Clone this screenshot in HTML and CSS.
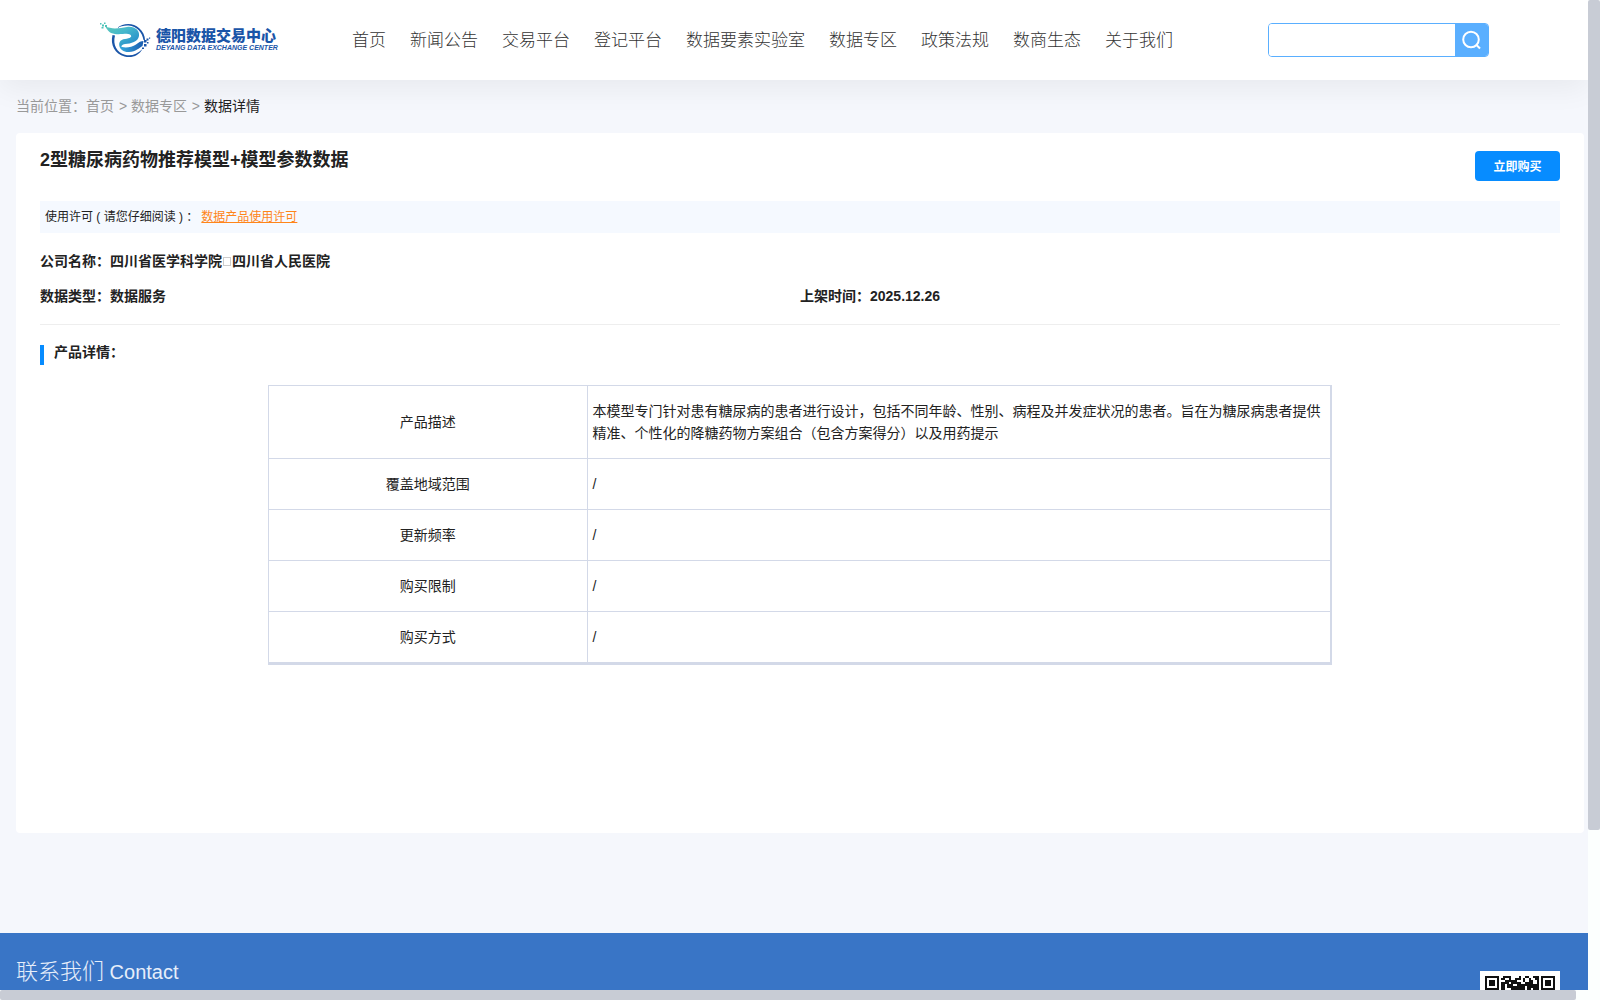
FILE: index.html
```html
<!DOCTYPE html>
<html lang="zh-CN">
<head>
<meta charset="UTF-8">
<meta name="viewport" content="width=device-width, initial-scale=1.0">
<title>德阳数据交易中心</title>
<link rel="stylesheet" href="styles.css">
</head>
<body>
    <header class="header">
        <a class="logo" href="#" aria-label="德阳数据交易中心">
            <svg width="180" height="40" viewBox="0 0 180 40">
                <defs>
                    <linearGradient id="swoosh" x1="0" y1="0" x2="1" y2="1">
                        <stop offset="0" stop-color="#5cc8b8"/>
                        <stop offset="0.4" stop-color="#45b8cc"/>
                        <stop offset="1" stop-color="#1b7cca"/>
                    </linearGradient>
                    <linearGradient id="tail" x1="0" y1="0" x2="1" y2="0">
                        <stop offset="0" stop-color="#35a8dc"/>
                        <stop offset="1" stop-color="#1a5cb0"/>
                    </linearGradient>
                </defs>
                <path d="M17 8C23 3 33 2.500 39 8C43 11.500 45 16 45 20L43.500 20C42.500 13 37 6 28.500 5.500C24 5.300 20 6.500 17 8Z" fill="#1a55a8"/>
                <path d="M12.500 15C10 25 15 34 24.500 36.500C32 38.500 39 35.500 42.500 29C37 34.500 31 36.300 25 34.800C17 32.500 12.500 25 15 15.500Z" fill="#1a55a8"/>
                <path d="M5 6C12 10 20 8 27 7C35 6 40 11 39 16C38 22 31 23.500 25 24C22 24.500 21 26 20.500 29C17.500 23 20 19.500 25 19C30 18.500 33 16.500 30 14.500C26 12.500 19 16 11 13C9 12 7 9.500 5 6Z" fill="url(#swoosh)"/>
                <path d="M20 25.500C22 28.500 31 28 36 24.500C39 22 41 21 43.500 21L42.500 26C39 28 36 31.500 29 32C24 32.300 20 30 20 25.500Z" fill="url(#tail)"/>
                <path d="M0 3h1.500v1.500H0zM2 4.500h2v2H2zM4 2.500h1.500v1.500H4zM1.500 7h2v1.500h-2zM5 5h2v2H5z" fill="#4fc3b8"/>
                <path d="M44 20h2.500v2.500H44zM46.500 18.500h2v2h-2zM44 24h2.500v2.500H44zM47 22h1.500v1.500H47zM49 17.500h1.200v1.200H49zM42 27.500h2v1.500h-2z" fill="#1a55a8"/>
                <text class="logo-cn" x="56" y="21">德阳数据交易中心</text>
                <text class="logo-en" x="56" y="30">DEYANG DATA EXCHANGE CENTER</text>
            </svg>
        </a>
        <nav class="nav">
            <a href="#">首页</a>
            <a href="#">新闻公告</a>
            <a href="#">交易平台</a>
            <a href="#">登记平台</a>
            <a href="#">数据要素实验室</a>
            <a href="#">数据专区</a>
            <a href="#">政策法规</a>
            <a href="#">数商生态</a>
            <a href="#">关于我们</a>
        </nav>
        <form class="search">
            <input type="text" aria-label="搜索">
            <button type="button" aria-label="搜索">
                <svg width="20" height="20" viewBox="0 0 20 20" fill="none" stroke="#fff" stroke-width="2">
                    <circle cx="9" cy="9.500" r="7.800"/>
                    <path d="M14 14.500L18 18.500"/>
                </svg>
            </button>
        </form>
    </header>

    <div class="breadcrumb">
        <span>当前位置：</span><a href="#">首页</a>
        <span class="sep">&gt;</span>
        <a href="#">数据专区</a>
        <span class="sep">&gt;</span>
        <span class="current">数据详情</span>
    </div>

    <main class="card">
        <div class="card-top">
            <h1>2型糖尿病药物推荐模型+模型参数数据</h1>
            <button class="buy" type="button">立即购买</button>
        </div>
        <div class="license">使用许可 ( 请您仔细阅读 ) ：<a href="#">数据产品使用许可</a></div>
        <div class="info">
            <div class="info-item full">公司名称：四川省医学科学院<span class="dot"></span>四川省人民医院</div>
            <div class="info-item">数据类型：数据服务</div>
            <div class="info-item">上架时间：2025.12.26</div>
        </div>
        <h2 class="section-title">产品详情：</h2>
        <table class="detail">
            <tbody>
                <tr>
                    <th scope="row">产品描述</th>
                    <td>本模型专门针对患有糖尿病的患者进行设计，包括不同年龄、性别、病程及并发症状况的患者。旨在为糖尿病患者提供精准、个性化的降糖药物方案组合（包含方案得分）以及用药提示</td>
                </tr>
                <tr>
                    <th scope="row">覆盖地域范围</th>
                    <td>/</td>
                </tr>
                <tr>
                    <th scope="row">更新频率</th>
                    <td>/</td>
                </tr>
                <tr>
                    <th scope="row">购买限制</th>
                    <td>/</td>
                </tr>
                <tr>
                    <th scope="row">购买方式</th>
                    <td>/</td>
                </tr>
            </tbody>
        </table>
    </main>

    <footer class="footer">
        <div class="contact"><span class="contact-cn">联系我们</span> Contact</div>
        <svg class="qrcode" width="80" height="80" viewBox="0 0 80 80" shape-rendering="crispEdges">
            <rect width="80" height="80" fill="#fff"/>
            <g fill="none" stroke="#111" stroke-width="2">
                <rect x="6" y="6" width="12" height="12"/>
                <rect x="62" y="6" width="12" height="12"/>
                <rect x="6" y="62" width="12" height="12"/>
            </g>
            <path d="M9 9h6v6H9zM65 9h6v6h-6zM9 65h6v6H9z" fill="#111"/>
            <path d="M23 5h8v2h-8zM39 5h2v4h-2zM45 5h4v2h-4zM53 5h6v2h-6zM21 7h4v2h-4zM29 7h2v4h-2zM35 7h4v2h-4zM43 7h2v4h-2zM49 7h2v4h-2zM55 7h4v2h-4zM21 11h4v4h-4zM25 9h4v4h-4zM31 9h6v4h-6zM45 11h6v4h-6zM51 9h2v4h-2zM57 9h2v8h-2zM27 13h6v4h-6zM37 11h4v4h-4zM41 13h4v6h-4zM51 13h6v4h-6zM21 15h4v4h-4zM31 15h4v4h-4zM35 15h6v4h-6zM47 15h4v4h-4zM53 17h6v2h-6z" fill="#111"/>
            <path d="M5 23h6v2H5zM15 23h4v4h-4zM23 21h8v4h-8zM37 23h6v2h-6zM49 23h8v4h-8zM63 23h4v4h-4zM7 29h8v4H7zM21 31h6v4h-6zM33 29h8v6h-8zM47 31h4v6h-4zM57 31h8v2h-8zM69 27h6v6h-6zM5 39h4v6H5zM15 37h6v6h-6zM27 41h8v4h-8zM41 39h4v8h-4zM53 41h6v4h-6zM63 37h8v6h-8zM9 49h8v4H9zM23 51h6v6h-6zM35 51h4v8h-4zM45 51h6v4h-6zM57 49h6v6h-6zM69 47h4v8h-4zM23 63h6v4h-6zM35 63h8v4h-8zM49 61h4v6h-4zM57 61h8v4h-8zM69 61h4v6h-4zM25 71h8v4h-8zM39 69h4v6h-4zM49 71h8v4h-8zM63 69h10v4H63z" fill="#111"/>
        </svg>
    </footer>

    <div class="scrollbar-y"><div class="thumb"></div></div>
    <div class="scrollbar-x"><div class="thumb"></div></div>
</body>
</html>
```
FILE: styles.css
```css
* {
    box-sizing: border-box;
}
body {
    margin: 0;
    font-family: "Liberation Sans", "Noto Sans CJK SC", sans-serif;
    font-size: 14px;
    line-height: 22px;
    color: #222;
    background-color: #f5f7fc;
}
a {
    color: inherit;
    text-decoration: none;
}

/* Header */
.header {
    display: flex;
    align-items: center;
    height: 80px;
    margin-right: 12px;
    padding: 0 99px 0 100px;
    background-color: #fff;
    box-shadow: 0 8px 30px rgba(0, 0, 0, 0.06);
}
.logo {
    display: flex;
    margin-right: 60px;
}
.logo-cn {
    font-family: "Noto Sans CJK SC", sans-serif;
    font-size: 15px;
    font-weight: 900;
    fill: #1a55a8;
}
.logo-en {
    font-size: 7px;
    font-weight: bold;
    font-style: italic;
    fill: #1a55a8;
}
.nav {
    display: flex;
    flex: 1;
    padding-top: 2px;
    font-size: 17px;
    font-weight: 300;
    color: #333;
}
.nav a {
    padding: 0 12px;
    white-space: nowrap;
}
.search {
    display: flex;
    width: 221px;
    height: 34px;
    border: 1px solid #5aafff;
    border-radius: 4px;
    overflow: hidden;
}
.search input {
    flex: 1;
    min-width: 0;
    padding: 0 10px;
    border: none;
    outline: none;
}
.search button {
    display: flex;
    align-items: center;
    justify-content: center;
    width: 33px;
    padding: 0;
    border: none;
    background-color: #5aafff;
    cursor: pointer;
}

/* Breadcrumb */
.breadcrumb {
    padding: 15px 16px 16px;
    color: #999;
}
.breadcrumb .sep {
    margin-left: 1px;
}
.breadcrumb .current {
    color: #222;
}

/* Product card */
.card {
    min-height: 700px;
    margin: 0 16px 100px;
    padding: 18px 24px;
    background-color: #fff;
    border-radius: 4px;
}
.card-top {
    display: flex;
    justify-content: space-between;
    align-items: flex-start;
    margin-bottom: 20px;
}
h1 {
    margin: 0;
    font-size: 18px;
    line-height: 18px;
}
.buy {
    width: 85px;
    height: 30px;
    padding: 0 0 2px;
    border: none;
    border-radius: 4px;
    font-family: inherit;
    font-size: 12px;
    font-weight: bold;
    color: #fff;
    background-color: #078cff;
    cursor: pointer;
}
.license {
    padding: 0 5px;
    font-size: 12px;
    line-height: 32px;
    background-color: #f5f9ff;
}
.license a {
    margin-left: 3px;
    color: #ff8519;
    text-decoration: underline;
}
.info {
    display: flex;
    flex-wrap: wrap;
    row-gap: 13px;
    padding: 17px 0;
    border-bottom: 1px solid #eee;
    font-weight: bold;
}
.info-item {
    width: 50%;
}
.info-item.full {
    width: 100%;
}
.dot {
    display: inline-block;
    width: 8px;
    height: 9px;
    margin: 0 1px;
    border: 1px solid #ccc;
}
.section-title {
    margin: 20px 0;
    padding: 0 0 6px 10px;
    border-left: 4px solid #078cff;
    font-size: 14px;
    line-height: 14px;
}
.detail {
    width: 70%;
    margin: 0 auto;
    border: 1px solid #d3d9e8;
    border-bottom-width: 2px;
    border-collapse: separate;
    border-spacing: 0;
    table-layout: fixed;
}
.detail th,
.detail td {
    padding: 14px 5px;
    border-right: 1px solid #d3d9e8;
    border-bottom: 1px solid #d3d9e8;
    text-align: left;
}
.detail th {
    width: 30%;
    font-weight: normal;
    text-align: center;
}

/* Footer */
.footer {
    display: flex;
    justify-content: space-between;
    min-height: 246px;
    padding: 28px 40px 28px 16px;
    background-color: #3975c6;
}
.contact {
    font-size: 20px;
    line-height: 22px;
    color: #e6eefa;
}
.contact-cn {
    font-size: 22px;
    font-weight: 300;
}
.qrcode {
    margin-top: 10px;
}

/* Scrollbars, always on top of the page */
.scrollbar-y,
.scrollbar-x {
    position: fixed;
    right: 0;
    bottom: 0;
    background-color: #fcfffe;
}
.scrollbar-y {
    top: 0;
    width: 12px;
}
.scrollbar-x {
    left: 0;
    height: 10px;
    padding-right: 24px;
}
.thumb {
    height: 100%;
    border-radius: 2px;
    background-color: #c8ccd5;
}
.scrollbar-y .thumb {
    height: 83%;
}
```
